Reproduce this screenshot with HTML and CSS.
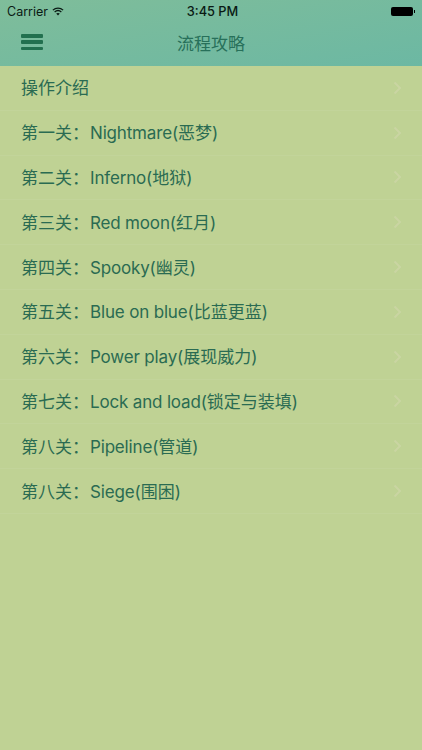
FILE: index.html
```html
<!DOCTYPE html>
<html lang="zh">
<head>
<meta charset="utf-8">
<title>流程攻略</title>
<link rel="stylesheet" href="styles.css">
</head>
<body>
<header class="top">
  <div class="status">
    <div class="status-left">
      <span>Carrier</span>
      <svg class="wifi" width="12" height="9" viewBox="0 0 14 10"><path d="M1 3.400C4.400.4 9.600.4 13 3.400" fill="none" stroke="#0a1a14" stroke-width="1.500"/><path d="M3.100 5.500C5.300 3.600 8.700 3.600 10.900 5.500" fill="none" stroke="#0a1a14" stroke-width="1.500"/><path d="M7 9.600 4.900 7.400C6.100 6.400 7.900 6.400 9.100 7.400Z" fill="#0a1a14"/></svg>
    </div>
    <div class="status-time">3:45 PM</div>
    <div class="status-right">
      <span class="battery"></span><span class="battery-tip"></span>
    </div>
  </div>
  <div class="nav">
    <button class="menu" aria-label="菜单"><span></span><span></span><span></span></button>
    <h1>流程攻略</h1>
  </div>
</header>
<ul class="list">
  <li><span>操作介绍</span><svg class="chev" width="9" height="14" viewBox="0 0 9 14"><path d="M1.500 1.500 7 7l-5.500 5.500" fill="none" stroke="#cdd6a6" stroke-width="2"/></svg></li>
  <li><span>第一关：<span class="latin">Nightmare</span>(恶梦)</span><svg class="chev" width="9" height="14" viewBox="0 0 9 14"><path d="M1.500 1.500 7 7l-5.500 5.500" fill="none" stroke="#cdd6a6" stroke-width="2"/></svg></li>
  <li><span>第二关：<span class="latin">Inferno</span>(地狱)</span><svg class="chev" width="9" height="14" viewBox="0 0 9 14"><path d="M1.500 1.500 7 7l-5.500 5.500" fill="none" stroke="#cdd6a6" stroke-width="2"/></svg></li>
  <li><span>第三关：<span class="latin">Red moon</span>(红月)</span><svg class="chev" width="9" height="14" viewBox="0 0 9 14"><path d="M1.500 1.500 7 7l-5.500 5.500" fill="none" stroke="#cdd6a6" stroke-width="2"/></svg></li>
  <li><span>第四关：<span class="latin">Spooky</span>(幽灵)</span><svg class="chev" width="9" height="14" viewBox="0 0 9 14"><path d="M1.500 1.500 7 7l-5.500 5.500" fill="none" stroke="#cdd6a6" stroke-width="2"/></svg></li>
  <li><span>第五关：<span class="latin">Blue on blue</span>(比蓝更蓝)</span><svg class="chev" width="9" height="14" viewBox="0 0 9 14"><path d="M1.500 1.500 7 7l-5.500 5.500" fill="none" stroke="#cdd6a6" stroke-width="2"/></svg></li>
  <li><span>第六关：<span class="latin">Power play</span>(展现威力)</span><svg class="chev" width="9" height="14" viewBox="0 0 9 14"><path d="M1.500 1.500 7 7l-5.500 5.500" fill="none" stroke="#cdd6a6" stroke-width="2"/></svg></li>
  <li><span>第七关：<span class="latin">Lock and load</span>(锁定与装填)</span><svg class="chev" width="9" height="14" viewBox="0 0 9 14"><path d="M1.500 1.500 7 7l-5.500 5.500" fill="none" stroke="#cdd6a6" stroke-width="2"/></svg></li>
  <li><span>第八关：<span class="latin">Pipeline</span>(管道)</span><svg class="chev" width="9" height="14" viewBox="0 0 9 14"><path d="M1.500 1.500 7 7l-5.500 5.500" fill="none" stroke="#cdd6a6" stroke-width="2"/></svg></li>
  <li><span>第八关：<span class="latin">Siege</span>(围困)</span><svg class="chev" width="9" height="14" viewBox="0 0 9 14"><path d="M1.500 1.500 7 7l-5.500 5.500" fill="none" stroke="#cdd6a6" stroke-width="2"/></svg></li>
</ul>
</body>
</html>
```

FILE: styles.css
```css
html, body {
  margin: 0;
  padding: 0;
  height: 100%;
}
body {
  background: #bfd294;
  font-family: Inter, "Noto Sans CJK SC", sans-serif;
  overflow: hidden;
}
.top {
  height: 66px;
  background: linear-gradient(170deg, #7fbd9a 0%, #6cb8a3 100%);
  display: flex;
  flex-direction: column;
}
.status {
  height: 22px;
  display: grid;
  grid-template-columns: 1fr auto 1fr;
  align-items: center;
  padding: 0 7px 0 7px;
  font-size: 12.5px;
  color: #0a1a14;
}
.status-left {
  display: flex;
  align-items: center;
  gap: 4px;
}
.status-time {
  font-weight: 500;
  font-size: 12.8px;
  margin-left: 3px;
}
.status-right {
  display: flex;
  justify-content: flex-end;
  align-items: center;
}
.battery {
  width: 22px;
  height: 9px;
  background: #000;
  border-radius: 2px;
}
.battery-tip {
  width: 1.500px;
  height: 3px;
  background: #000;
  margin-left: 1px;
}
.nav {
  flex: 1;
  display: flex;
  align-items: center;
  justify-content: center;
  position: relative;
  padding-bottom: 4px;
}
.nav h1 {
  margin: 0;
  font-size: 17px;
  font-weight: 400;
  color: #27705a;
}
.menu {
  position: absolute;
  left: 21px;
  top: 12px;
  width: 22px;
  height: 16px;
  padding: 0;
  border: 0;
  background: none;
  display: flex;
  flex-direction: column;
  justify-content: space-between;
}
.menu span {
  height: 3.500px;
  border-radius: 1px;
  background: #22704f;
}
.list {
  list-style: none;
  margin: 0;
  padding: 0;
}
.list li {
  height: 44.8px;
  box-sizing: border-box;
  display: flex;
  align-items: center;
  justify-content: space-between;
  padding: 0 20px 2px 21px;
  border-bottom: 1px solid #c2d49a;
  font-size: 17px;
  color: #2a6b52;
}
.latin {
  margin-left: 1px;
  letter-spacing: -0.17px;
}
.chev {
  display: block;
  opacity: 0.8;
  margin-top: 2px;
}
```
